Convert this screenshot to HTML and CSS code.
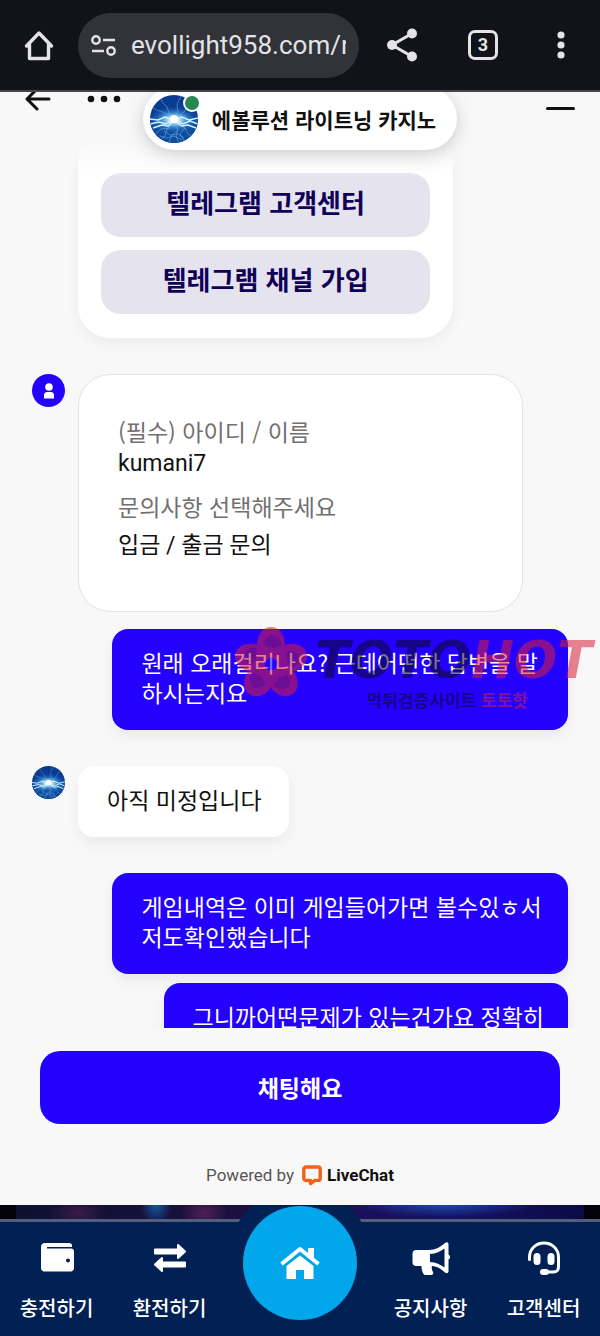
FILE: index.html
```
<!DOCTYPE html>
<html lang="ko">
<head>
<meta charset="utf-8">
<meta name="viewport" content="width=device-width, initial-scale=1">
<title>에볼루션 라이트닝 카지노</title>
<link rel="stylesheet" href="styles.css">
</head>
<body>

<!-- shared avatar picture -->
<svg class="defs" width="0" height="0" aria-hidden="true">
	<defs>
		<radialGradient id="glow" cx="50%" cy="50%" r="50%">
			<stop offset="0" stop-color="#ffffff"/>
			<stop offset="0.2" stop-color="#b9e6fa"/>
			<stop offset="0.5" stop-color="#3c8ed6" stop-opacity="0.8"/>
			<stop offset="1" stop-color="#0a3a92" stop-opacity="0"/>
		</radialGradient>
		<clipPath id="round"><circle cx="24" cy="24" r="24"/></clipPath>
		<symbol id="storm" viewBox="0 0 48 48">
			<g clip-path="url(#round)">
				<rect width="48" height="48" fill="#0a3a92"/>
				<rect y="25" width="48" height="23" fill="#0c4d9c"/>
				<ellipse cx="24" cy="25" rx="28" ry="15" fill="url(#glow)"/>
				<g fill="none" stroke="#7fbdec" stroke-width="0.5" stroke-linejoin="round">
					<path d="M24 25 19 18 17 12 12 7 11 2M24 25l4-9-1-7 4-8M24 25l10-8 4-7 5-3M24 25 13 17l-7-2-6-5"/>
					<path d="M24 27l-7 7-2 7-5 5M24 27l4 8-2 6 3 7M24 27l11 6 3 6 6 3M20 33l-9 1-7 6M28 35l-6 5-3 7M35 33l-5 6 5 8M14 36l6 4 8-1 6 4M10 41l7 2 7-2 8 4"/>
				</g>
				<g fill="none" stroke="#d5f2ff" stroke-width="1.4">
					<path d="M0 24l8 1 7-3 9 3 8-3 7 3 9-2M0 29l9-2 7 2 8-4 9 4 7-3 8 3M3 33l9-3 6 1 6-5 8 5 6-1 8 3"/>
				</g>
				<circle cx="24" cy="24" r="4" fill="#fff"/>
			</g>
		</symbol>
	</defs>
</svg>

<div class="screen">

<div class="browser">
	<button class="bar-button" aria-label="홈">
		<svg width="30" height="32" viewBox="0 0 30 32" fill="none" stroke="#e3e3e8" stroke-width="3.4" stroke-linecap="round" stroke-linejoin="round"><path d="M2.500 17 15 4l12.500 13M5.500 15v14.500h19V15"/></svg>
	</button>
	<label class="address">
		<svg width="26" height="22" viewBox="0 0 26 22" fill="none" stroke="#e3e3e8" stroke-width="2.400"><circle cx="5" cy="6" r="3.700"/><path d="M12 6h12M1 17h12"/><circle cx="20" cy="17" r="3.700"/></svg>
		<input type="text" value="evollight958.com/r" aria-label="주소">
	</label>
	<button class="bar-button share" aria-label="공유">
		<svg width="32" height="34" viewBox="0 0 32 34" fill="#e3e3e8"><path d="M26 5.500 6 17l20 11.500" fill="none" stroke="#e3e3e8" stroke-width="3"/><circle cx="26" cy="5.500" r="5"/><circle cx="6" cy="17" r="5"/><circle cx="26" cy="28.500" r="5"/></svg>
	</button>
	<button class="bar-button" aria-label="탭 3개"><span class="tabs">3</span></button>
	<button class="bar-button" aria-label="메뉴">
		<svg width="8" height="28" viewBox="0 0 8 28" fill="#e3e3e8"><circle cx="4" cy="4" r="3.600"/><circle cx="4" cy="14" r="3.600"/><circle cx="4" cy="24" r="3.600"/></svg>
	</button>
</div>

<main class="chat">
	<header class="chat-header">
		<div class="tools">
			<button aria-label="뒤로">
				<svg width="26" height="24" viewBox="0 0 26 24" fill="none" stroke="#111" stroke-width="3" stroke-linecap="round" stroke-linejoin="round"><path d="M24 12H2M12 2 2 12l10 10"/></svg>
			</button>
			<button aria-label="더보기">
				<svg width="34" height="24" viewBox="0 0 34 24" fill="#111"><circle cx="4" cy="12" r="3.300"/><circle cx="17" cy="12" r="3.300"/><circle cx="30" cy="12" r="3.300"/></svg>
			</button>
		</div>
		<div class="agent">
			<span class="agent-photo"><svg width="48" height="48"><use href="#storm"/></svg><i class="online"></i></span>
			<h1>에볼루션 라이트닝 카지노</h1>
		</div>
		<div class="tools right">
			<button aria-label="최소화"><span class="minimize"></span></button>
		</div>
	</header>

	<div class="messages">
		<div class="card links">
			<button>텔레그램 고객센터</button>
			<button>텔레그램 채널 가입</button>
		</div>

		<div class="row">
			<span class="avatar user">
				<svg width="12" height="16" viewBox="0 0 12 16" fill="#fff"><circle cx="6" cy="4" r="3.800"/><path d="M1 15.500V12c0-2 1.500-3 3-3h4c1.500 0 3 1 3 3v3.500z"/></svg>
			</span>
			<dl class="card form">
				<dt>(필수) 아이디 / 이름</dt>
				<dd>kumani7</dd>
				<dt>문의사항 선택해주세요</dt>
				<dd>입금 / 출금 문의</dd>
			</dl>
		</div>

		<div class="bubble mine after-form">
			원래 오래걸리나요? 근데어떤한 답변을 말하시는지요
			<div class="watermark">
				<svg width="72" height="72" viewBox="0 0 72 72">
					<g fill="#d82036">
						<path id="petal" d="M36 1c8 0 13 7 14 16l-3 16-11 9-11-9-3-16C23 8 28 1 36 1z"/>
						<use href="#petal" transform="rotate(72 36 38)"/>
						<use href="#petal" transform="rotate(144 36 38)"/>
						<use href="#petal" transform="rotate(216 36 38)"/>
						<use href="#petal" transform="rotate(288 36 38)"/>
					</g>
					<g fill="#70104a" opacity="0.45">
						<path id="fold" d="M36 9c6 1 10 5 11 10l-8 3-9-2c-2-4 1-9 6-11z"/>
						<use href="#fold" transform="rotate(72 36 38)"/>
						<use href="#fold" transform="rotate(144 36 38)"/>
						<use href="#fold" transform="rotate(216 36 38)"/>
						<use href="#fold" transform="rotate(288 36 38)"/>
					</g>
					<path fill="#2400ff" d="M36 31l7 5-3 8h-8l-3-8z"/>
				</svg>
				<div class="brand">
					<b>TOTO<em>HOT</em></b>
					<small>먹튀검증사이트 <em>토토핫</em></small>
				</div>
			</div>
		</div>

		<div class="row">
			<span class="avatar"><svg width="33" height="33"><use href="#storm"/></svg></span>
			<div class="bubble">아직 미정입니다</div>
		</div>

		<div class="bubble mine">게임내역은 이미 게임들어가면 볼수있ㅎ서 저도확인했습니다</div>
		<div class="bubble mine next">그니까어떤문제가 있는건가요 정확히</div>
	</div>

	<footer class="chat-footer">
		<button class="start">채팅해요</button>
		<p class="powered">Powered by
			<a href="#"><svg width="20" height="21" viewBox="0 0 20 21" fill="none" stroke="#f2601c" stroke-width="3.400" stroke-linejoin="round"><path d="M4 2h12c1.200 0 2.200 1 2.200 2.200v9c0 1.200-1 2.200-2.200 2.200h-3L8.500 18.500v-3H4c-1.200 0-2.200-1-2.200-2.200v-9C1.800 3 2.800 2 4 2z"/></svg>LiveChat</a>
		</p>
	</footer>
</main>

<div class="bottom">
	<div class="scene"></div>
	<nav>
		<a href="#">
			<svg width="34" height="32" viewBox="0 0 34 32"><path fill="#fff" d="M5 2h24c2 0 3 1 3 2.500V6H7v1.500h24c1.800 0 3 1 3 3V27c0 2-1.500 3.500-3.500 3.500H4.500C2.500 30.500 1 29 1 27V6c0-2.500 1.500-4 4-4z"/><circle cx="28" cy="19.500" r="2" fill="#012054"/></svg>
			충전하기
		</a>
		<a href="#">
			<svg width="34" height="32" viewBox="0 0 34 32" fill="#fff" stroke="#fff" stroke-width="2" stroke-linejoin="round"><path d="M2 8.500h23V4l7 6.500-7 6.500v-4.500H2zM32 21.500H9V17l-7 6.500L9 30v-4.500h23z"/></svg>
			환전하기
		</a>
		<a class="home" href="#" aria-label="홈">
			<svg width="40" height="34" viewBox="0 0 40 34"><path d="M1.500 18 20 3l18.500 15" fill="none" stroke="#fff" stroke-width="4" stroke-linejoin="round"/><path fill="#fff" d="M28 2h6v12l-6-5zM20 9.500 33.500 20v13H24v-9h-8v9H6.500V20z"/></svg>
		</a>
		<a href="#">
			<svg width="38" height="34" viewBox="0 0 38 34" fill="#fff"><path fill-rule="evenodd" d="M4 9h13c7 0 11-3 16-7 2-1.300 3.500-.5 3.500 1.500v10c2 1 2 4 0 5V30c0 2-1.500 2.800-3.500 1.500-4-3.500-7-6-13-6.500-.8 2 0 4 1 6 .7 1.400 0 3-1.500 3h-6c-1 0-2-.6-2.300-1.500C10 30 9.300 27.500 9.500 25H4c-2 0-3.500-1.500-3.500-3.500v-9C.5 10.500 2 9 4 9zm14 4v8c6 .3 10.500 2.500 14.500 5.500v-19C28.500 10.500 24 12.700 18 13z"/></svg>
			공지사항
		</a>
		<a href="#">
			<svg width="34" height="34" viewBox="0 0 34 34" fill="#fff"><path d="M2.500 18.500V16c0-8 6.500-14 14.500-14s14.500 6 14.500 14v10c0 3-2 5-5 5H18" fill="none" stroke="#fff" stroke-width="3" stroke-linecap="round"/><rect x="6.500" y="12" width="7" height="12" rx="3.500"/><rect x="20.500" y="12" width="7" height="12" rx="3.500"/><rect x="13" y="28" width="9" height="6" rx="3"/></svg>
			고객센터
		</a>
	</nav>
</div>

</div>

</body>
</html>
```
FILE: styles.css
```
* {
	box-sizing: border-box;
}

body {
	margin: 0;
	background: #f8f8f8;
	color: #111;
	font-family: "Noto Sans CJK KR", Roboto, sans-serif;
	font-size: 23px;
	line-height: 30px;
}

button {
	border: 0;
	padding: 0;
	background: none;
	color: inherit;
	font: inherit;
}

svg {
	display: block;
	flex: none;
}

a {
	color: inherit;
	text-decoration: none;
}

.defs {
	position: absolute;
}

.screen {
	display: flex;
	flex-direction: column;
	height: 100vh;
}

/* browser bar */

.browser {
	display: flex;
	align-items: center;
	flex: none;
	height: 92px;
	background: #111318;
	border-bottom: 2px solid #44464c;
	position: relative;
	z-index: 3;
}

.bar-button {
	display: flex;
	align-items: center;
	justify-content: center;
	flex: none;
	width: 78px;
	height: 64px;
}

.bar-button.share {
	width: 85px;
}

.address {
	display: flex;
	align-items: center;
	flex: 1;
	min-width: 0;
	gap: 14px;
	height: 65px;
	padding: 0 13px;
	border-radius: 33px;
	background: #313338;
}

.address input {
	flex: 1;
	min-width: 0;
	width: 0;
	padding: 0;
	border: 0;
	background: none;
	color: #e3e3e8;
	font: 26px/32px Roboto, sans-serif;
}

.tabs {
	width: 30px;
	height: 30px;
	border: 3px solid #e3e3e8;
	border-radius: 7px;
	color: #e3e3e8;
	font: bold 18px/24px Roboto, sans-serif;
}

/* chat widget */

.chat {
	display: flex;
	flex-direction: column;
	flex: 1;
	min-height: 0;
	position: relative;
	overflow: hidden;
}

/* floats over the scrolled messages */
.chat-header {
	position: absolute;
	top: -5px;
	left: 0;
	right: 0;
	z-index: 2;
	display: grid;
	grid-template-columns: 1fr auto 1fr;
	align-items: start;
	height: 92px;
	padding: 0 25px;
	background: linear-gradient(#f8f8f8 60%, rgba(248, 248, 248, 0));
}

.tools {
	display: flex;
	gap: 36px;
}

.tools.right {
	justify-content: flex-end;
}

.minimize {
	display: block;
	width: 29px;
	height: 3px;
	margin-top: 20px;
	border-radius: 2px;
	background: #111;
}

.agent {
	display: flex;
	align-items: center;
	gap: 14px;
	height: 63px;
	padding: 0 21px 0 7px;
	border-radius: 32px;
	background: #fff;
	box-shadow: 0 4px 18px rgba(0, 0, 0, 0.18);
}

.agent-photo {
	position: relative;
}

.online {
	position: absolute;
	top: -1px;
	right: -3px;
	width: 18px;
	height: 18px;
	border: 2px solid #fff;
	border-radius: 50%;
	background: #268750;
}

h1 {
	margin: 0;
	font-size: 21px;
	font-weight: bold;
}

.messages {
	display: flex;
	flex-direction: column;
	align-items: flex-start;
	gap: 36px;
	flex: 1;
	min-height: 0;
	overflow: hidden;
	padding: 38px 32px 0;
}

.messages > * {
	flex: none;
}

.row {
	display: flex;
	align-items: flex-start;
	gap: 13px;
	width: 100%;
}

.avatar {
	flex: none;
	width: 33px;
	height: 33px;
	border-radius: 50%;
}

.avatar.user {
	display: flex;
	align-items: center;
	justify-content: center;
	background: #2400ff;
}

.card {
	margin: 0;
	border-radius: 32px;
	background: #fff;
}

.links {
	display: flex;
	flex-direction: column;
	gap: 13px;
	width: 70%;
	margin-left: 46px;
	padding: 43px 23px 24px;
	box-shadow: 0 5px 14px rgba(0, 0, 0, 0.05);
}

.links button {
	height: 64px;
	padding-bottom: 7px;
	border-radius: 20px;
	background: #e5e3ee;
	color: #100057;
	font-size: 26px;
	font-weight: bold;
}

.form {
	flex: 0 1 445px;
	padding: 41px 39px 50px;
	border: 1px solid #e2e2e2;
}

.form dt {
	margin-bottom: 3px;
	color: #707070;
}

.form dd {
	margin: 0 0 12px;
	font-family: Roboto, "Noto Sans CJK KR", sans-serif;
}

.form dd + dt {
	margin-bottom: 10px;
}

.form dd:last-child {
	margin: 0;
}

.bubble {
	max-width: 85%;
	padding: 18px 27px 23px 29px;
	border-radius: 16px;
	background: #fff;
	box-shadow: 0 6px 14px rgba(0, 0, 0, 0.06);
}

.mine {
	align-self: flex-end;
	position: relative;
	padding-right: 24px;
	background: #2400ff;
	color: #fff;
}

.after-form {
	margin-top: -19px;
}

.next {
	margin-top: -27px;
}

/* site stamp lying across the message */
.watermark {
	position: absolute;
	top: -3px;
	right: -24px;
	display: flex;
	gap: 8px;
	opacity: 0.55;
	color: #0e0828;
}

.watermark em {
	color: #d82036;
	font-style: inherit;
}

.brand {
	display: flex;
	flex-direction: column;
}

.brand b {
	font: italic bold 51px/70px "DejaVu Sans", sans-serif;
}

.brand small {
	align-self: center;
	padding-right: 12px;
	font-size: 17px;
	font-weight: bold;
	line-height: 24px;
	margin-top: -8px;
}

/* chat footer */

.chat-footer {
	flex: none;
	padding: 23px 40px 14px;
}

.start {
	display: block;
	width: 100%;
	height: 73px;
	padding-bottom: 2px;
	border-radius: 20px;
	background: #2400ff;
	color: #fff;
	font-weight: bold;
}

.powered {
	display: flex;
	align-items: center;
	justify-content: center;
	gap: 8px;
	margin: 36px 0 1px;
	color: #555;
	font: 17px/30px Roboto, sans-serif;
}

.powered a {
	display: flex;
	align-items: center;
	gap: 5px;
	color: #111;
	font-weight: bold;
}

/* site navigation */

.bottom {
	flex: none;
	overflow: hidden;
	background: #012054;
}

.scene {
	height: 17px;
	border-bottom: 3px solid #525e7b;
	background:
		linear-gradient(90deg, #020208 16px, transparent 16px calc(100% - 16px), #020208 calc(100% - 16px)),
		radial-gradient(ellipse 90px 12px at 74% 0, #1c49a0, transparent),
		radial-gradient(ellipse 16px 20px at 26% 0, #14589a, transparent),
		radial-gradient(ellipse 24px 20px at 34% 60%, #4e2054, transparent),
		radial-gradient(ellipse 30px 16px at 13% 60%, #3a1c48, transparent),
		linear-gradient(90deg, #0c1030, #1c1040 40%, #17106a 75%, #0a0a40);
}

nav {
	display: grid;
	grid-template-columns: 1fr 1fr 148px 1fr 1fr;
	height: 114px;
	color: #fff;
	font-size: 20px;
	font-weight: 500;
}

nav a {
	display: flex;
	flex-direction: column;
	align-items: center;
	justify-content: space-between;
	padding: 19px 0 13px;
}

nav .home {
	justify-content: center;
	justify-self: center;
	width: 114px;
	height: 114px;
	margin-top: -16px;
	padding: 0;
	border-radius: 50%;
	background: #02a6ea;
	box-shadow: 0 0 0 17px #012054;
}
```
